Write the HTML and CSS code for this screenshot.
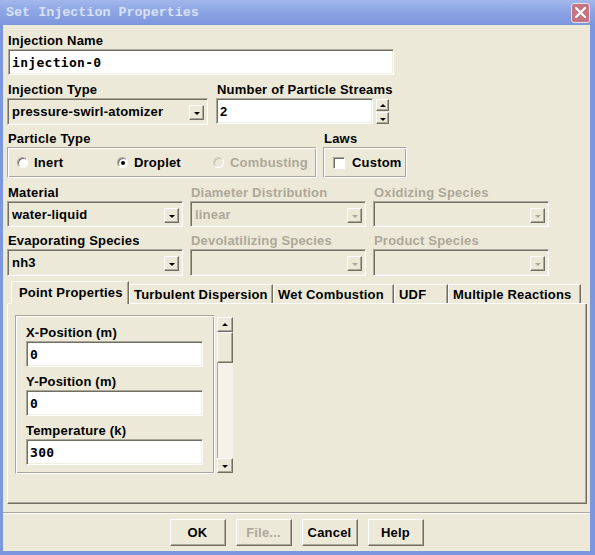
FILE: index.html
```html
<!doctype html>
<html>
<head>
<meta charset="utf-8">
<title>Set Injection Properties</title>
<link rel="stylesheet" href="styles.css">
</head>
<body>
<div class="window">
	<div class="titlebar">
		<span class="title">Set Injection Properties</span>
		<span class="close">
			<svg width="11" height="11" viewBox="0 0 11 11"><path d="M1 1L10 10M10 1L1 10" stroke="#fff" stroke-width="2.2" stroke-linecap="square"/></svg>
		</span>
	</div>

	<div class="client">
		<div class="form">
			<!-- name -->
			<div class="row row-name">
				<div class="field">
					<label class="lbl">Injection Name</label>
					<div class="entry mono w-name">injection-0</div>
				</div>
			</div>

			<!-- type + streams -->
			<div class="row row-b">
				<div class="field w-type">
					<label class="lbl">Injection Type</label>
					<div class="combo combo-tall"><span class="combo-text">pressure-swirl-atomizer</span><span class="drop"><i></i></span></div>
				</div>
				<div class="field">
					<label class="lbl">Number of Particle Streams</label>
					<div class="spin-row">
						<div class="entry w-streams">2</div>
						<div class="spin">
							<span class="spin-btn"><i class="up"></i></span>
							<span class="spin-btn"><i></i></span>
						</div>
					</div>
				</div>
			</div>

			<!-- particle type + laws -->
			<div class="row row-c">
				<div class="field">
					<label class="lbl">Particle Type</label>
					<div class="group w-ptype">
						<span class="opt opt-1"><span class="radio"></span>Inert</span>
						<span class="opt opt-2"><span class="radio on"></span>Droplet</span>
						<span class="opt off"><span class="radio"></span>Combusting</span>
					</div>
				</div>
				<div class="field">
					<label class="lbl">Laws</label>
					<div class="group w-laws">
						<span class="opt"><span class="check"></span>Custom</span>
					</div>
				</div>
			</div>

			<!-- material row -->
			<div class="row row-d">
				<div class="field w-combo">
					<label class="lbl">Material</label>
					<div class="combo"><span class="combo-text">water-liquid</span><span class="drop"><i></i></span></div>
				</div>
				<div class="field w-combo">
					<label class="lbl off">Diameter Distribution</label>
					<div class="combo"><span class="combo-text off">linear</span><span class="drop"><i class="dim"></i></span></div>
				</div>
				<div class="field w-combo">
					<label class="lbl off">Oxidizing Species</label>
					<div class="combo"><span class="combo-text"></span><span class="drop"><i class="dim"></i></span></div>
				</div>
			</div>

			<!-- species row -->
			<div class="row row-e">
				<div class="field w-combo">
					<label class="lbl">Evaporating Species</label>
					<div class="combo combo-tall"><span class="combo-text">nh3</span><span class="drop"><i></i></span></div>
				</div>
				<div class="field w-combo">
					<label class="lbl off">Devolatilizing Species</label>
					<div class="combo combo-tall"><span class="combo-text"></span><span class="drop"><i class="dim"></i></span></div>
				</div>
				<div class="field w-combo">
					<label class="lbl off">Product Species</label>
					<div class="combo combo-tall"><span class="combo-text"></span><span class="drop"><i class="dim"></i></span></div>
				</div>
			</div>

			<!-- notebook -->
			<div class="tabs">
				<span class="tab active t1">Point Properties</span>
				<span class="tab t2">Turbulent Dispersion</span>
				<span class="tab t3">Wet Combustion</span>
				<span class="tab t4">UDF</span>
				<span class="tab t5">Multiple Reactions</span>
			</div>
			<div class="panel">
				<div class="scroller">
					<div class="scroll-frame">
						<label class="lbl">X-Position (m)</label>
						<div class="entry mono w-pt">0</div>
						<label class="lbl">Y-Position (m)</label>
						<div class="entry mono w-pt">0</div>
						<label class="lbl">Temperature (k)</label>
						<div class="entry mono w-pt">300</div>
					</div>
					<div class="vscroll">
						<span class="sb-btn"><i class="up"></i></span>
						<span class="sb-thumb"></span>
						<span class="sb-track"></span>
						<span class="sb-btn"><i></i></span>
					</div>
				</div>
			</div>
		</div>

		<div class="sep"></div>
		<div class="btns">
			<span class="btn">OK</span>
			<span class="btn off">File...</span>
			<span class="btn">Cancel</span>
			<span class="btn">Help</span>
		</div>
	</div>
</div>
</body>
</html>
```

FILE: styles.css
```css
*{ margin:0; padding:0; box-sizing:border-box; }
body{
	background:#fff;
	font:bold 13px "Liberation Sans", Arial, sans-serif;
	letter-spacing:0.2px;
	color:#000;
}

/* window frame (inactive XP caption) */
.window{
	width:595px;
	height:555px;
	background:#7c97df;
	display:flex;
	flex-direction:column;
}
.titlebar{
	height:25px;
	display:flex;
	align-items:center;
	justify-content:space-between;
	padding:0 5px 0 6px;
	background:linear-gradient(#a3b7ec, #8da5e5 45%, #7d97df);
}
.title{
	font:bold 13.4px "Liberation Mono", monospace;
	letter-spacing:0;
	color:#d8e1f6;
}
.close{
	width:19px;
	height:20px;
	border:1px solid #ecdce3;
	border-radius:3px;
	background:#c67383;
	display:flex;
	align-items:center;
	justify-content:center;
}
.client{
	flex:1;
	margin:0 5px 4px 3px;
	background:#ece9d8;
	display:flex;
	flex-direction:column;
}
.form{ padding:8px 0 0 4px; }

/* rows */
.row{ display:flex; }
.row-b{ margin-top:7px; gap:8px; }
.row-c{ margin-top:6px; gap:6px; }
.row-d{ margin-top:7px; gap:7px; }
.row-e{ margin-top:6px; gap:7px; }
.field{ display:flex; flex-direction:column; }

.lbl{
	display:block;
	height:16px;
	line-height:16px;
	padding-left:1px;
	white-space:nowrap;
}
.off{ color:#aca899; }

/* sunken edit field */
.entry{
	height:26px;
	background:#fff;
	border:1px solid;
	border-color:#aca899 #fff #fff #aca899;
	box-shadow:inset 1px 1px #716f64, inset -1px -1px #f1efe2;
	padding:0 3px;
	display:flex;
	align-items:center;
	white-space:nowrap;
}
.mono{ font:bold 13px "DejaVu Sans Mono", monospace; letter-spacing:0.3px; }
.w-name{ width:386px; margin-left:1px; }
.w-streams{ width:157px; height:26px; }
.w-pt{ width:177px; margin:0 0 7px 1px; height:26px; }

/* combo box */
.w-type{ width:201px; }
.w-combo{ width:176px; }
.combo{
	height:26px;
	border:1px solid;
	border-color:#aca899 #fff #fff #aca899;
	box-shadow:inset 1px 1px #716f64, inset -1px -1px #f1efe2;
	display:flex;
	align-items:center;
	padding:0 3px 0 4px;
}
.combo-tall{ height:27px; }
.combo-text{ flex:1; white-space:nowrap; overflow:hidden; }
.drop, .spin-btn, .sb-btn{
	display:flex;
	align-items:center;
	justify-content:center;
	background:#ece9d8;
	border:1px solid;
	border-color:#fff #716f64 #716f64 #fff;
	box-shadow:inset -1px -1px #aca899;
}
.drop{ width:15px; height:15px; margin-top:2px; }
.drop i, .spin-btn i, .sb-btn i{
	width:0;
	height:0;
	border-left:3px solid transparent;
	border-right:3px solid transparent;
	border-top:3px solid #000;
	margin-top:2px;
}
.drop i.dim{ border-top-color:#aca899; }
.spin-btn i.up, .sb-btn i.up{
	border-top:0;
	border-bottom:3px solid #000;
	margin-top:0;
}

/* spinner */
.spin-row{ display:flex; gap:3px; }
.spin{ display:flex; flex-direction:column; gap:1px; padding-top:1px; }
.spin-btn{ width:13px; height:12px; }

/* group frames */
.group{
	height:31px;
	border:1px solid;
	border-color:#aca899 #fff #fff #aca899;
	box-shadow:inset 1px 1px #fff, inset -1px -1px #aca899;
	display:flex;
	align-items:center;
	padding-left:9px;
}
.w-ptype{ width:310px; }
.w-laws{ width:84px; }
.opt{ display:flex; align-items:center; white-space:nowrap; }
.opt-1{ width:100px; }
.opt-2{ width:96px; }
.radio{
	width:11px;
	height:11px;
	border-radius:50%;
	background:#fff;
	border:1px solid;
	border-color:#aca899 #fff #fff #aca899;
	box-shadow:inset 1px 1px #716f64;
	margin-right:6px;
	display:flex;
	align-items:center;
	justify-content:center;
}
.radio.on::after{
	content:"";
	width:4px;
	height:4px;
	border-radius:50%;
	background:#000;
}
.off .radio{ background:#ece9d8; border-color:#d6d2c2 #fff #fff #d6d2c2; box-shadow:inset 1px 1px #c5c2b2; }
.check{
	width:12px;
	height:12px;
	background:#fff;
	border:1px solid;
	border-color:#aca899 #fff #fff #aca899;
	box-shadow:inset 1px 1px #716f64;
	margin-right:7px;
}

/* notebook tabs */
.tabs{
	margin:5px 3px 0 1px;
	height:23px;
	border-bottom:1px solid #fff;
	display:flex;
	align-items:flex-end;
	padding-left:3px;
}
.tab{
	height:19px;
	border:1px solid;
	border-bottom:0;
	border-color:#fff #716f64 transparent #fff;
	box-shadow:inset -1px 0 #aca899;
	display:flex;
	align-items:center;
	padding-left:4px;
	white-space:nowrap;
	background:#ece9d8;
}
.tab.active{
	height:23px;
	margin-bottom:-1px;
	padding:0 0 2px 7px;
	position:relative;
}
.t1{ width:118px; }
.t2{ width:144px; }
.t3{ width:121px; }
.t4{ width:54px; }
.t5{ width:133px; }

.panel{
	margin-right:3px;
	height:200px;
	border:1px solid;
	border-top:0;
	border-color:transparent #716f64 #716f64 #fff;
	box-shadow:inset -1px -1px #aca899;
	padding:11px 0 0 7px;
}
.scroller{ display:flex; gap:2px; }
.scroll-frame{
	width:200px;
	height:159px;
	border:1px solid;
	border-color:#aca899 #fff #fff #aca899;
	box-shadow:inset 1px 1px #fff, inset -1px -1px #aca899;
	padding:9px 0 0 9px;
	overflow:hidden;
}
.vscroll{
	width:16px;
	height:156px;
	margin-top:2px;
	display:flex;
	flex-direction:column;
}
.sb-btn{ width:16px; height:15px; flex:none; }
.sb-thumb{
	height:31px;
	flex:none;
	border:1px solid;
	border-color:#fff #716f64 #716f64 #fff;
	box-shadow:inset -1px -1px #aca899;
}
.sb-track{ flex:1; background:#f4f2e9; border-left:1px solid #aca899; }

/* bottom buttons */
.sep{
	margin-top:8px;
	border-top:1px solid #aca899;
	border-bottom:1px solid #fff;
}
.btns{
	margin-top:5px;
	display:flex;
	justify-content:center;
	gap:10px;
}
.btn{
	width:56px;
	height:27px;
	display:flex;
	align-items:center;
	justify-content:center;
	border:1px solid;
	border-color:#fff #716f64 #716f64 #fff;
	box-shadow:inset -1px -1px #aca899;
}
.btn.off{ color:#aca899; }
```
